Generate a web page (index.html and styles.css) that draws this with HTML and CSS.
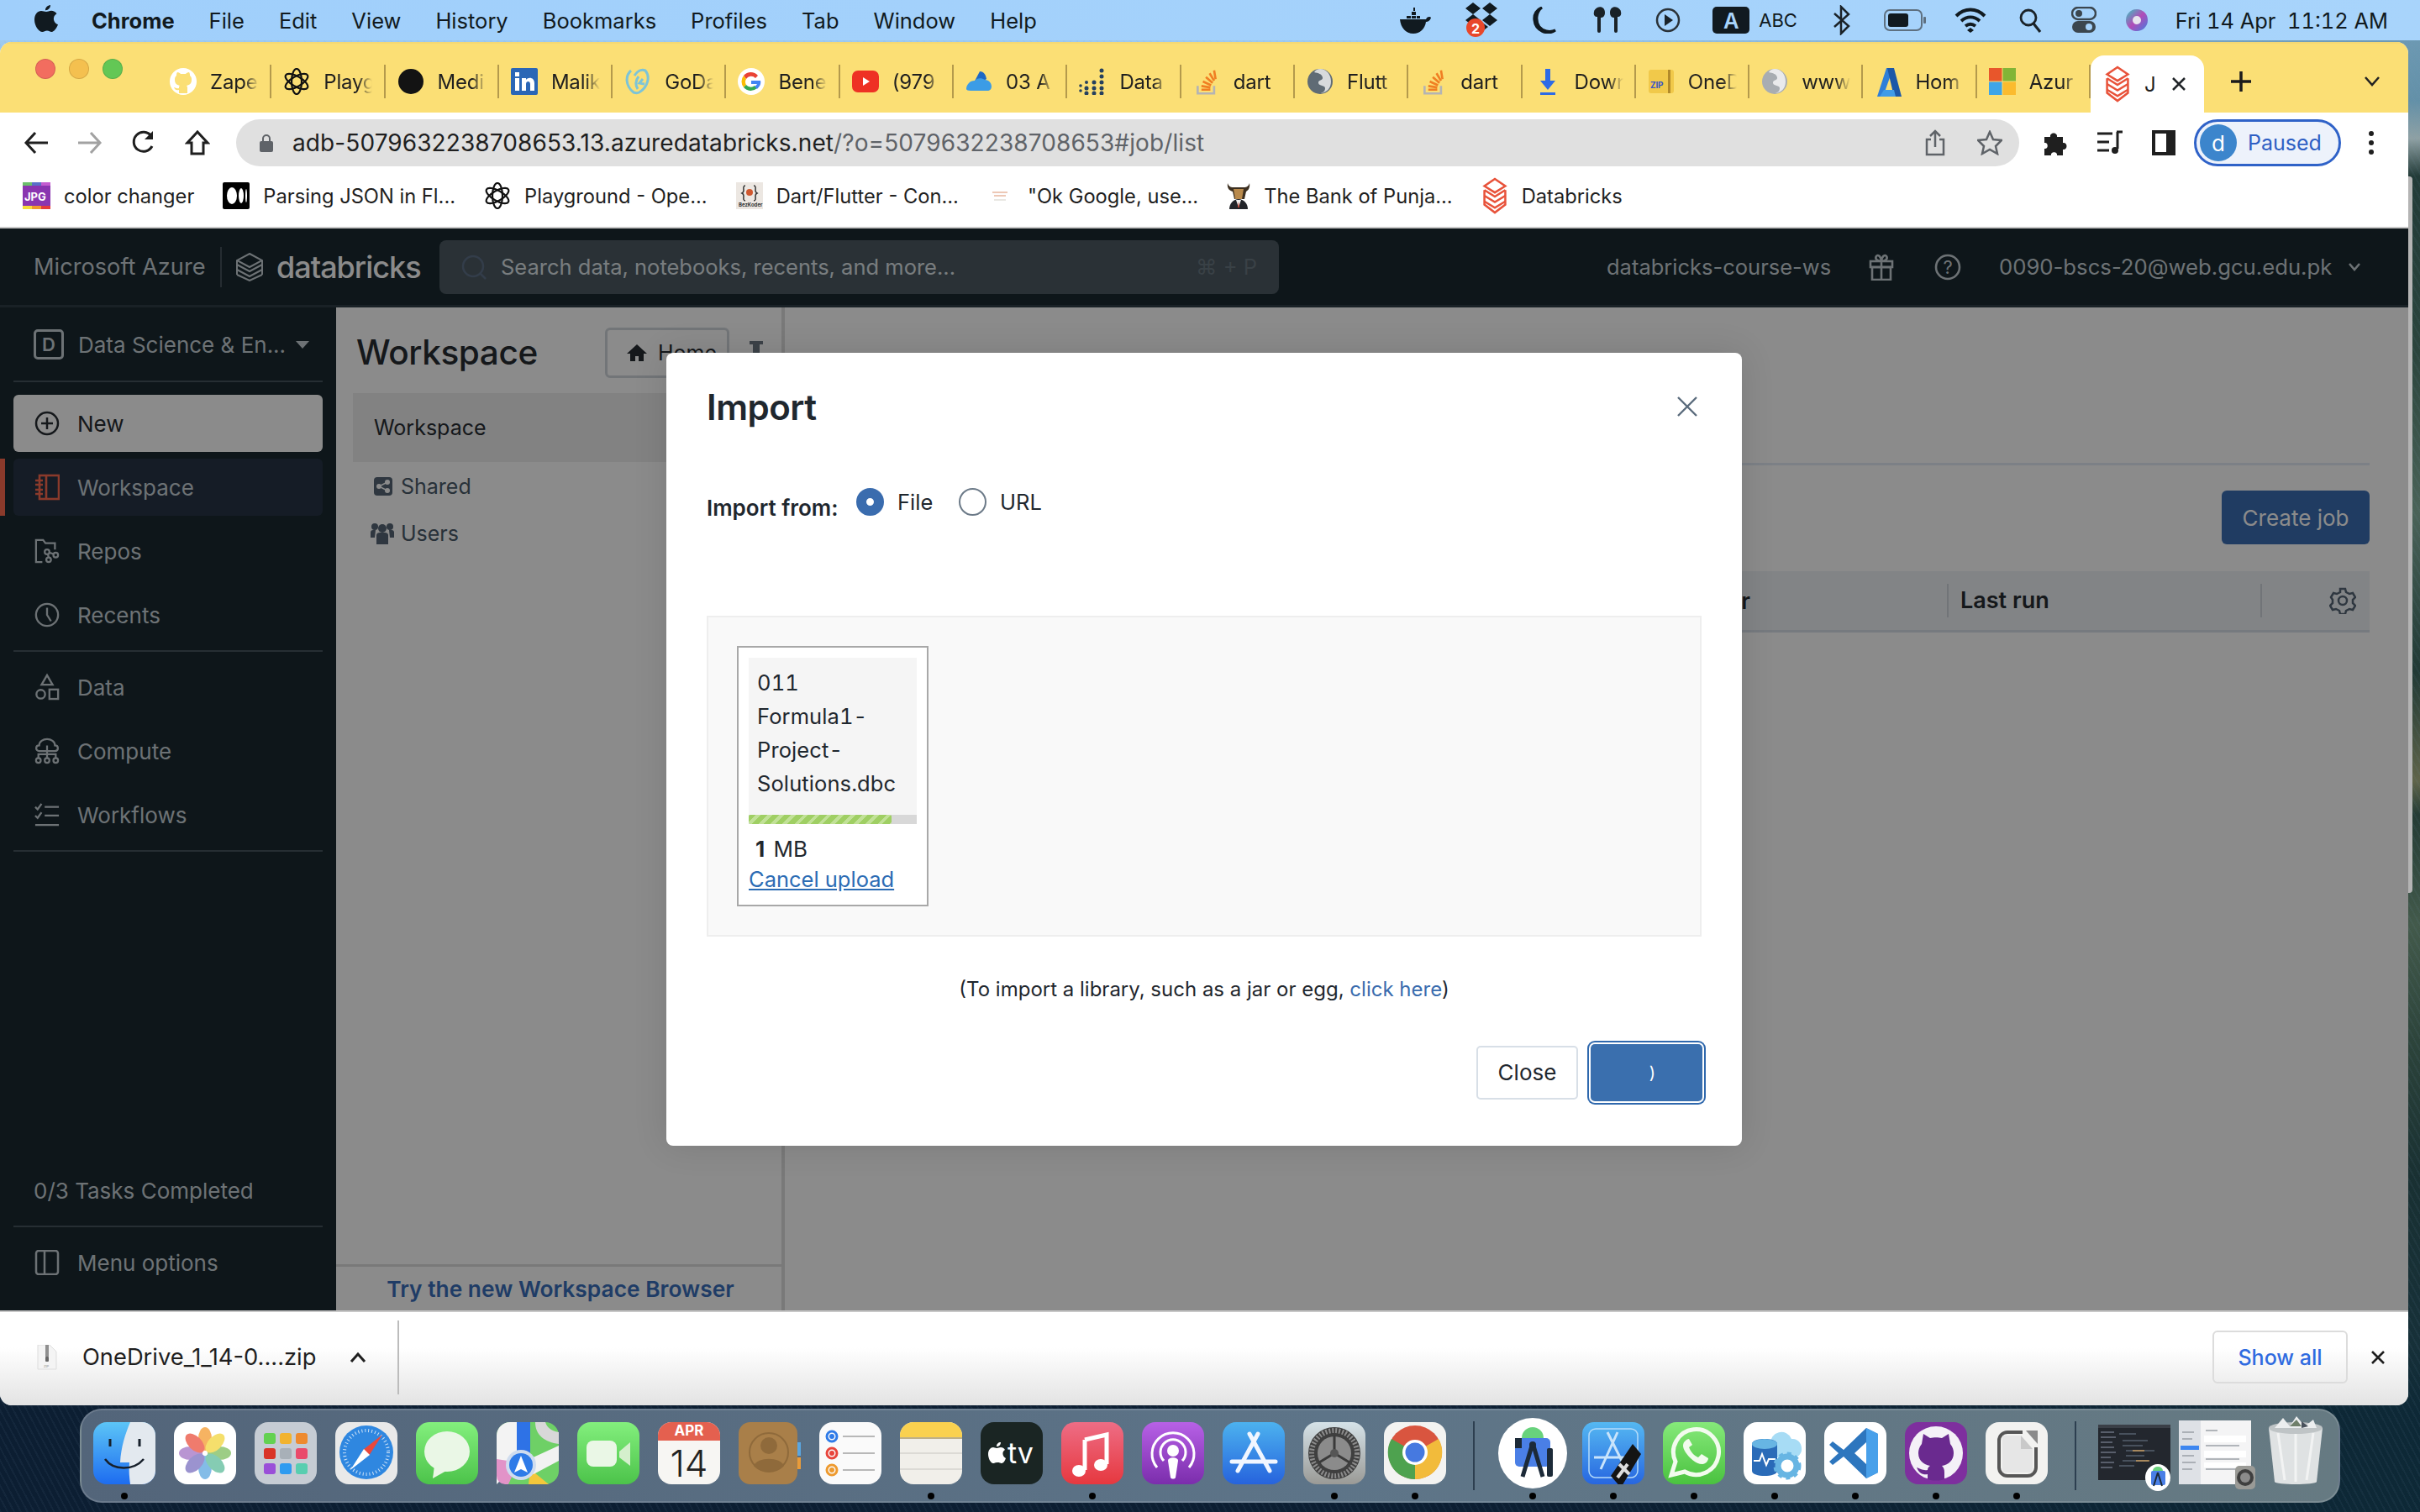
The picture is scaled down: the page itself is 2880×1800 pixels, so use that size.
FILE: index.html
```html
<!DOCTYPE html>
<html lang="en">
<head>
<meta charset="utf-8">
<title>Jobs - Databricks</title>
<link rel="stylesheet" href="styles.css">
</head>
<body>
<svg class="defs" xmlns="http://www.w3.org/2000/svg">
  <symbol id="db" viewBox="0 0 32 46"><g fill="none" stroke="currentColor" stroke-width="2.6"><path d="M16 2 29 11 16 19 3 11Z"/><path d="M3 16 16 24 29 16"/><path d="M3 23 16 31 29 23"/><path d="M3 30 16 38 29 30"/><path d="M3 16V34L16 44 29 34V16"/></g></symbol>
  <symbol id="db2" viewBox="0 0 32 34"><g fill="none" stroke="currentColor" stroke-width="2"><path d="M16 1 31 9 16 17 1 9Z"/><path d="M1 14 16 22 31 14"/><path d="M1 20 16 28 31 20"/><path d="M1 26 16 33 31 26"/><path d="M1 9V26M31 9V26"/></g></symbol>
  <symbol id="ai" viewBox="0 0 32 32"><g fill="none" stroke="currentColor" stroke-width="2.2"><ellipse cx="16" cy="16" rx="6" ry="15"/><ellipse cx="16" cy="16" rx="6" ry="15" transform="rotate(60 16 16)"/><ellipse cx="16" cy="16" rx="6" ry="15" transform="rotate(120 16 16)"/></g></symbol>
  <symbol id="globe" viewBox="0 0 32 32"><circle cx="16" cy="16" r="15" fill="currentColor"/><path d="M9 5c5 1 9 2 10 6s-6 3-5 7 8 2 8 6-3 5-5 6c7-1 12-6 12-14S24 1 16 1c-3 0-5 1-7 4Z" fill="#fff" opacity=".75"/></symbol>
  <symbol id="so" viewBox="0 0 32 36"><path d="M4 24v10h22V24" fill="none" stroke="#b4b4b4" stroke-width="3"/><path d="M9 29h12M9 24l12 2M11 18l11 5M15 12l9 8M20 7l6 10M26 3l2 12" stroke="#f07f23" stroke-width="3" fill="none"/></symbol>
</svg>

<div class="back-window"></div>

<header class="menubar">
  <nav class="menu-left">
    <svg class="apple" width="28" height="32" viewBox="0 0 28 32"><path d="M19 0c.3 3-2.800 6.500-6 6.200C12.700 3.200 15.800.2 19 0ZM14 8c2 0 3.500-1.300 6-1.300 2.500 0 5 1.300 6.500 3.600-5.500 3.200-4.500 10.700 1.500 13-1.500 3.700-4.500 8.700-7.500 8.700-2.200 0-3-1.400-5.500-1.400s-3.500 1.400-5.500 1.400C5 32 0 24.500 0 17.500 0 11 4 7 8 7c2.500 0 4 1 6 1Z" fill="#111a20"/></svg>
    <span class="menu-strong">Chrome</span><span>File</span><span>Edit</span><span>View</span><span>History</span><span>Bookmarks</span><span>Profiles</span><span>Tab</span><span>Window</span><span>Help</span>
  </nav>
  <div class="menu-right">
    <svg width="40" height="32" viewBox="0 0 40 32"><path d="M2 15h31c2-4 5-3 6-2-1 4-4 5-6 5-1 8-7 14-15 14C9 32 3 25 2 15Z" fill="#111a20"/><path d="M10 11h5v3h-5zM16 11h5v3h-5zM16 6h5v4h-5zM22 11h4v3h-4z" fill="#111a20"/><path d="M18 1h2v4h-2z" fill="#111a20"/></svg>
    <svg width="42" height="42" viewBox="0 0 42 42" class="drop"><path d="M11 0l9 7-9 7-9-7ZM31 0l9 7-9 7-9-7ZM11 14l9 7-9 7-9-7ZM31 14l9 7-9 7-9-7ZM21 23l8 6-8 6-8-6Z" fill="#111a20"/><circle cx="14" cy="30" r="11" fill="#e8472b"/><text x="14" y="37" class="badge-num">2</text></svg>
    <svg width="34" height="32" viewBox="0 0 34 32"><path d="M13 1C6 6 5 17 10 24c4 5 12 7 19 4-10 7-24 0-25-12C3 9 7 3 13 1Z" fill="#111a20" stroke="#111a20" stroke-width="3"/></svg>
    <svg width="38" height="34" viewBox="0 0 38 34"><path d="M7 2c5-2 9 1 9 6s-3 6-5 6v16a2 2 0 0 1-4 0V13C4 13 2 11 3 7c0-2 2-4 4-5ZM31 2c-5-2-9 1-9 6s3 6 5 6v16a2 2 0 0 0 4 0V13c3 0 5-2 4-6 0-2-2-4-4-5Z" fill="#1a2228"/></svg>
    <svg width="30" height="32" viewBox="0 0 30 32"><circle cx="15" cy="16" r="13" fill="none" stroke="#2a3238" stroke-width="2.500"/><path d="M11 9l10 7-10 7Z" fill="#1a2228"/></svg>
    <span class="input-a">A</span><span class="input-abc">ABC</span>
    <svg class="mr-bt" width="24" height="36" viewBox="0 0 24 36"><path d="M3 10 20 25 11 34V2l9 9L3 26" fill="none" stroke="#1a2228" stroke-width="2.500"/></svg>
    <svg width="50" height="26" viewBox="0 0 50 26"><rect x="1" y="1" width="44" height="24" rx="6" fill="none" stroke="#5e7080" stroke-width="2"/><rect x="5" y="5" width="24" height="16" rx="3" fill="#111a20"/><rect x="47" y="9" width="3" height="8" rx="1" fill="#5e7080"/></svg>
    <svg class="mr-wifi" width="38" height="30" viewBox="0 0 38 30"><path d="M2 10c10-10 24-10 34 0M8 16c7-6 15-6 22 0M13 22c4-3 8-3 12 0" fill="none" stroke="#111a20" stroke-width="4"/><path d="M19 24l4 3-4 3-4-3Z" fill="#111a20"/></svg>
    <svg width="28" height="30" viewBox="0 0 28 30"><circle cx="12" cy="12" r="9" fill="none" stroke="#1a2228" stroke-width="2.800"/><path d="M18 19l8 10" stroke="#1a2228" stroke-width="3.200"/></svg>
    <svg class="mr-ctl" width="30" height="32" viewBox="0 0 30 32"><rect x="1" y="1" width="28" height="14" rx="7" fill="none" stroke="#3b464e" stroke-width="2.500"/><circle cx="9" cy="8" r="4" fill="#3b464e"/><rect x="1" y="17" width="28" height="14" rx="7" fill="#3b464e"/><circle cx="21" cy="24" r="4" fill="#a5d2fb"/></svg>
    <svg class="mr-siri" width="28" height="32" viewBox="0 0 28 32"><defs><linearGradient id="siri" x1="0" y1="0" x2="1" y2="1"><stop offset="0" stop-color="#37c6c0"/><stop offset=".5" stop-color="#b24bb8"/><stop offset="1" stop-color="#3f7fe0"/></linearGradient></defs><circle cx="14" cy="16" r="13" fill="url(#siri)"/><circle cx="14" cy="16" r="5" fill="#e8e4ee"/></svg>
    <span class="clock">Fri 14 Apr&nbsp;&nbsp;11:12 AM</span>
  </div>
</header>

<div class="window">
  <div class="tabstrip">
    <div class="lights"><i class="light red"></i><i class="light amber"></i><i class="light green"></i></div>
    <div class="tabs">
      <div class="tab"><svg width="32" height="32" viewBox="0 0 32 32"><circle cx="16" cy="16" r="16" fill="#fff"/><path d="M11 30v-4c-4 1-5-1-6-3 2 0 3 2 6 1 0-2 0-2 1-3-4-1-6-3-6-7 0-2 0-3 2-5 0-1 0-3 1-4 2 0 3 1 4 2 2 0 4 0 6 0 1-1 2-2 4-2 1 1 1 3 1 4 2 2 2 3 2 5 0 4-2 6-6 7 1 1 1 2 1 3v6Z" fill="#fbdf75"/></svg><span class="tab-title">Zape</span></div>
      <div class="tab"><svg class="ink" width="32" height="32"><use href="#ai"/></svg><span class="tab-title">Playg</span></div>
      <div class="tab"><svg width="32" height="32" viewBox="0 0 32 32"><circle cx="16" cy="16" r="15" fill="#131313"/></svg><span class="tab-title">Medi</span></div>
      <div class="tab"><svg width="32" height="32" viewBox="0 0 32 32"><rect width="32" height="32" rx="2" fill="#2a66b6"/><path d="M5 12h5v15H5zM5 5h5v5H5zM13 12h5v2c3-4 10-3 10 4v9h-5v-8c0-4-5-4-5 0v8h-5Z" fill="#fff"/></svg><span class="tab-title">Malik</span></div>
      <div class="tab"><svg width="32" height="32" viewBox="0 0 32 32"><path d="M8 3c-7 6-7 18 3 26 3 1 6 1 8-1 9-6 12-18 6-25-5-2-10 1-13 6M17 10c-4 5-4 11-1 15M22 13l-4 5 6 1" fill="none" stroke="#7cc4d8" stroke-width="3"/></svg><span class="tab-title">GoDa</span></div>
      <div class="tab"><svg width="32" height="32" viewBox="0 0 32 32"><circle cx="16" cy="16" r="16" fill="#fff"/><path d="M24 9a11 11 0 0 0-17 0l3 4a7 7 0 0 1 11-1Z" fill="#ea4335"/><path d="M7 9a11 11 0 0 0 0 14l3-3a7 7 0 0 1 0-7Z" fill="#fbbc05"/><path d="M7 23a11 11 0 0 0 16 1l-3-3a7 7 0 0 1-10-1Z" fill="#34a853"/><path d="M27 15H16v4h7a7 7 0 0 1-3 3l3 3c3-3 5-6 4-10Z" fill="#4285f4"/></svg><span class="tab-title">Bene</span></div>
      <div class="tab"><svg width="32" height="32" viewBox="0 0 32 32"><rect y="3" width="32" height="26" rx="7" fill="#ee3124"/><path d="M13 11l8 5-8 5Z" fill="#fff"/></svg><span class="tab-title">(979</span></div>
      <div class="tab"><svg width="32" height="32" viewBox="0 0 32 32"><path d="M6 25 17 4c4 0 7 3 8 9Z" fill="#1d68c5"/><path d="M1 25c0-5 4-10 10-10 2-3 8-4 12-1 5 0 8 4 8 8 0 3-2 5-5 5H6c-3 0-5-1-5-2Z" fill="#3b9ce6"/></svg><span class="tab-title">03 A</span></div>
      <div class="tab"><svg width="32" height="32" viewBox="0 0 32 32" fill="#25405e"><circle cx="27" cy="3" r="2.500"/><circle cx="27" cy="10" r="2.500"/><circle cx="27" cy="17" r="2.500"/><circle cx="27" cy="24" r="2.500"/><circle cx="27" cy="30" r="2.500"/><circle cx="18" cy="17" r="2.500"/><circle cx="18" cy="24" r="2.500"/><circle cx="18" cy="30" r="2.500"/><circle cx="9" cy="17" r="2"/><circle cx="9" cy="24" r="2.500"/><circle cx="9" cy="30" r="2.500"/><circle cx="2" cy="21" r="1.800"/><circle cx="2" cy="27" r="1.800"/></svg><span class="tab-title">Data</span></div>
      <div class="tab"><svg width="32" height="32"><use href="#so"/></svg><span class="tab-title">dart</span></div>
      <div class="tab"><svg width="32" height="32" class="globe-dark"><use href="#globe"/></svg><span class="tab-title">Flutt</span></div>
      <div class="tab"><svg width="32" height="32"><use href="#so"/></svg><span class="tab-title">dart</span></div>
      <div class="tab"><svg width="32" height="32" viewBox="0 0 32 32"><path d="M13 1h6v14h6L16 26 7 15h6ZM7 29h18v3H7Z" fill="#2d6be6"/></svg><span class="tab-title">Down</span></div>
      <div class="tab"><svg width="32" height="32" viewBox="0 0 32 32"><rect x="1" y="2" width="30" height="28" rx="3" fill="#f1c94a"/><rect x="24" y="2" width="3" height="28" fill="#b28a2a"/><text x="3" y="24" class="zip">ZIP</text></svg><span class="tab-title">OneD</span></div>
      <div class="tab"><svg width="32" height="32" class="globe-light"><use href="#globe"/></svg><span class="tab-title">www</span></div>
      <div class="tab"><svg width="32" height="36" viewBox="0 0 32 36"><path d="M3 36 14 2h8L10 36Z" fill="#2f7fd8"/><path d="M15 2h8l9 34h-9Z" fill="#1c58a8"/><path d="M11 28h12l2 8H6Z" fill="#3f9be8"/></svg><span class="tab-title">Hom</span></div>
      <div class="tab"><svg width="32" height="32" viewBox="0 0 32 32"><rect width="15.500" height="15.500" fill="#e8562b"/><rect x="16.500" width="15.500" height="15.500" fill="#82b536"/><rect y="16.500" width="15.500" height="15.500" fill="#3ea5e8"/><rect x="16.500" y="16.500" width="15.500" height="15.500" fill="#fbbb2e"/></svg><span class="tab-title">Azur</span></div>
      <div class="tab tab-active"><svg class="db-red" width="32" height="44"><use href="#db"/></svg><span class="tab-title tab-title-short">J</span><svg class="tab-close" width="16" height="16" viewBox="0 0 16 16"><path d="M1 1 15 15M15 1 1 15" stroke="#202428" stroke-width="2.500"/></svg></div>
    </div>
    <svg class="newtab" width="26" height="26" viewBox="0 0 26 26"><path d="M13 1V25M1 13H25" stroke="#1b1b1b" stroke-width="3.500"/></svg>
    <svg class="tabmenu" width="20" height="14" viewBox="0 0 20 14"><path d="M2 2 10 11 18 2" fill="none" stroke="#222" stroke-width="2.500"/></svg>
  </div>

  <div class="toolbar">
    <svg width="30" height="28" viewBox="0 0 30 28"><path d="M14 2 3 14 14 26M3 14H29" fill="none" stroke="#1f1f1f" stroke-width="3"/></svg>
    <svg width="30" height="28" viewBox="0 0 30 28"><path d="M16 2 27 14 16 26M27 14H1" fill="none" stroke="#a2a2a2" stroke-width="3"/></svg>
    <svg width="30" height="30" viewBox="0 0 30 30"><path d="M25 19a11.500 11.500 0 1 1-1-12" fill="none" stroke="#1f1f1f" stroke-width="3"/><path d="M26 1v10H16Z" fill="#1f1f1f"/></svg>
    <svg width="30" height="30" viewBox="0 0 30 30"><path d="M15 2 3 15h5v13h14V15h5Z" fill="none" stroke="#1f1f1f" stroke-width="3"/></svg>
    <div class="omnibox">
      <svg width="16" height="22" viewBox="0 0 16 22"><path d="M4 9V6a4 4 0 0 1 8 0v3" fill="none" stroke="#5f6368" stroke-width="2"/><rect y="9" width="16" height="13" rx="2" fill="#5f6368"/></svg>
      <span class="url"><b>adb-5079632238708653.13.azuredatabricks.net</b>/?o=5079632238708653#job/list</span>
      <svg class="omni-share" width="24" height="32" viewBox="0 0 24 32"><path d="M7 12H2v18h20V12h-5M12 21V2M6 8l6-6 6 6" fill="none" stroke="#5f6368" stroke-width="2.500"/></svg>
      <svg class="omni-star" width="30" height="30" viewBox="0 0 30 30"><path d="M15 2l4 9 10 1-7 7 2 9-9-5-9 5 2-9-7-7 10-1Z" fill="none" stroke="#5f6368" stroke-width="2.500"/></svg>
    </div>
    <svg class="tool-ext" width="30" height="30" viewBox="0 0 30 30"><path d="M2 8h7c-1-6 9-6 8 0h7v7c6-1 6 9 0 8v7h-7c1-5-8-5-7 0H2v-8c5 1 5-8 0-7Z" fill="#1f1f1f"/></svg>
    <svg class="tool-media" width="32" height="30" viewBox="0 0 32 30"><path d="M1 4h18M1 14h14M1 24h14" stroke="#1f1f1f" stroke-width="3"/><path d="M25 2v20" stroke="#1f1f1f" stroke-width="3"/><circle cx="22" cy="24" r="4" fill="#1f1f1f"/><path d="M24 2h7" stroke="#1f1f1f" stroke-width="3"/></svg>
    <svg class="tool-side" width="28" height="30" viewBox="0 0 28 30"><rect x="2" y="2" width="24" height="26" fill="none" stroke="#1f1f1f" stroke-width="4"/><rect x="17" y="2" width="9" height="26" fill="#1f1f1f"/></svg>
    <div class="profile"><span class="avatar">d</span><span class="paused">Paused</span></div>
    <svg class="tool-more" width="8" height="30" viewBox="0 0 8 30"><circle cx="4" cy="4" r="3" fill="#1f1f1f"/><circle cx="4" cy="15" r="3" fill="#1f1f1f"/><circle cx="4" cy="26" r="3" fill="#1f1f1f"/></svg>
  </div>

  <div class="bookmarks">
    <div class="bm"><svg width="33" height="32" viewBox="0 0 33 32"><rect width="33" height="32" fill="#8a35b0"/><rect width="11" height="4" fill="#6bbf6b"/><rect x="11" width="11" height="4" fill="#5a70c8"/><rect x="22" width="11" height="4" fill="#c45cd0"/><rect y="28" width="11" height="4" fill="#f5dd3a"/><rect x="11" y="28" width="11" height="4" fill="#f09a2e"/><rect x="22" y="28" width="11" height="4" fill="#e43b3b"/><text x="2" y="22" class="jpg">JPG</text></svg><span>color changer</span></div>
    <div class="bm"><svg width="32" height="32" viewBox="0 0 32 32"><rect width="32" height="32" rx="2" fill="#000"/><ellipse cx="11" cy="16" rx="6" ry="10" fill="#fff"/><ellipse cx="22" cy="16" rx="3" ry="9" fill="#fff"/><ellipse cx="28" cy="16" rx="1" ry="8" fill="#fff"/></svg><span>Parsing JSON in Fl...</span></div>
    <div class="bm"><svg class="ink" width="32" height="32"><use href="#ai"/></svg><span>Playground - Ope...</span></div>
    <div class="bm"><svg width="32" height="32" viewBox="0 0 32 32"><rect width="32" height="32" fill="#ece7e2"/><path d="M11 4c-3 0-2 4-2 6s-2 3-2 3 2 1 2 3-1 6 2 6M21 4c3 0 2 4 2 6s2 3 2 3-2 1-2 3 1 6-2 6" fill="none" stroke="#333" stroke-width="1.500"/><circle cx="16" cy="12" r="4" fill="#d0582f"/><text x="3" y="29" class="bez">BezKoder</text></svg><span>Dart/Flutter - Con...</span></div>
    <div class="bm bm-google"><svg width="22" height="32" viewBox="0 0 22 32"><path d="M2 12h18M4 16h14" stroke="#e7b79e" stroke-width="1.500"/><path d="M4 21h14" stroke="#e2dfd8" stroke-width="1.500"/></svg><span>"Ok Google, use...</span></div>
    <div class="bm"><svg width="28" height="32" viewBox="0 0 28 32"><path d="M1 1c1 4 4 5 6 5h14c2 0 5-1 6-5 1 6-2 9-4 10l-2 9H9L7 11C3 10 0 7 1 1Z" fill="#3c2f20"/><path d="M8 8h12l-2 12h-8Z" fill="#b98a4c"/><path d="M3 32c0-7 5-12 11-12s11 5 11 12Z" fill="#23252a"/><path d="M11 21h6l-3 9Z" fill="#eee"/><path d="M14 23l1 7h-2Z" fill="#c53c2a"/></svg><span>The Bank of Punja...</span></div>
    <div class="bm"><svg class="db-red" width="32" height="44"><use href="#db"/></svg><span>Databricks</span></div>
  </div>

  <main class="app">
    <header class="app-head">
      <span class="brand-ms">Microsoft Azure</span>
      <i class="brand-sep"></i>
      <svg class="db-gray" width="32" height="34"><use href="#db2"/></svg>
      <span class="brand-db">databricks</span>
      <div class="search">
        <svg width="30" height="30" viewBox="0 0 30 30"><circle cx="14" cy="14" r="12" fill="none" stroke="#5e7088" stroke-width="2.500"/><path d="M23 23l6 6" stroke="#5e7088" stroke-width="2.500"/></svg>
        <span class="search-ph">Search data, notebooks, recents, and more...</span>
        <span class="search-kbd">⌘ + P</span>
      </div>
      <span class="ws-name">databricks-course-ws</span>
      <svg class="head-gift" width="30" height="32" viewBox="0 0 30 32"><g fill="none" stroke="#c8d1d7" stroke-width="2.600"><rect x="2" y="9" width="26" height="7"/><rect x="4" y="16" width="22" height="15"/><path d="M15 9V31M15 9C10 9 7 6 9 3s6 1 6 6c0-5 4-9 6-6s-1 6-6 6Z"/></g></svg>
      <svg class="head-help" width="32" height="34" viewBox="0 0 32 34"><circle cx="16" cy="17" r="14" fill="none" stroke="#c8d1d7" stroke-width="2.600"/><text x="16" y="25" class="help-q">?</text></svg>
      <span class="email">0090-bscs-20@web.gcu.edu.pk</span>
      <svg class="head-caret" width="16" height="12" viewBox="0 0 16 12"><path d="M2 2 8 9 14 2" fill="none" stroke="#c8d1d7" stroke-width="2.600"/></svg>
    </header>
    <div class="app-body">
      <aside class="sidebar">
        <div class="persona">
          <span class="persona-d">D</span><span class="persona-name">Data Science &amp; En...</span><i class="persona-caret"></i>
        </div>
        <div class="side-rule"></div>
        <div class="side-item side-new"><svg width="30" height="30" viewBox="0 0 30 30"><g fill="none" stroke="#272c32" stroke-width="2.500"><circle cx="15" cy="15" r="13"/><path d="M15 8V22M8 15H22"/></g></svg><span>New</span></div>
        <div class="side-item side-active"><svg width="30" height="32" viewBox="0 0 30 32"><g fill="none" stroke="#ff6b4f" stroke-width="2.600"><rect x="6" y="2" width="23" height="28"/><path d="M14 2V30M1 8h9M1 13h9M1 19h9M1 24h9"/></g></svg><span>Workspace</span></div>
        <div class="side-item"><svg width="32" height="32" viewBox="0 0 32 32"><g fill="none" stroke="#c8d1d7" stroke-width="2.400"><path d="M10 30H2V2h9l3 4h12v8"/><circle cx="16" cy="17" r="3"/><circle cx="18" cy="27" r="3"/><circle cx="27" cy="21" r="3"/><path d="M17 20l1 4M19 18l6 2"/></g></svg><span>Repos</span></div>
        <div class="side-item"><svg width="32" height="32" viewBox="0 0 32 32"><g fill="none" stroke="#c8d1d7" stroke-width="2.500"><circle cx="16" cy="16" r="14"/><path d="M16 7V16L21 24"/></g></svg><span>Recents</span></div>
        <div class="side-rule side-rule-mid"></div>
        <div class="side-item"><svg width="32" height="34" viewBox="0 0 32 34"><g fill="none" stroke="#c8d1d7" stroke-width="2.500"><path d="M16 2 23 14H9Z"/><circle cx="8" cy="26" r="5.500"/><rect x="19" y="20" width="11" height="12"/></g></svg><span>Data</span></div>
        <div class="side-item"><svg width="32" height="34" viewBox="0 0 32 34"><g fill="none" stroke="#c8d1d7" stroke-width="2.400"><path d="M6 17c-5 0-5-7 0-7 0-5 5-8 10-8s10 3 10 8c5 0 5 7 0 7Z"/><path d="M16 10V17M5 27V21H27V27M16 17V27"/><circle cx="5" cy="29" r="3"/><circle cx="16" cy="29" r="3"/><circle cx="27" cy="29" r="3"/></g></svg><span>Compute</span></div>
        <div class="side-item"><svg width="32" height="32" viewBox="0 0 32 32"><g fill="none" stroke="#c8d1d7" stroke-width="2.400"><path d="M1 6l3 3 5-7M1 17l3 3 5-7M13 6H31M13 17H31M1 29H31"/></g></svg><span>Workflows</span></div>
        <div class="side-rule side-rule-mid"></div>
        <div class="side-spacer"></div>
        <div class="side-tasks">0/3 Tasks Completed</div>
        <div class="side-rule side-rule-low"></div>
        <div class="side-item side-menu"><svg width="30" height="30" viewBox="0 0 30 30"><g fill="none" stroke="#c8d1d7" stroke-width="2.500"><rect x="2" y="1" width="26" height="28" rx="3"/><path d="M12 1V29"/></g></svg><span>Menu options</span></div>
      </aside>

      <section class="panel">
        <div class="panel-head">
          <h2>Workspace</h2>
          <div class="home-btn"><svg width="24" height="22" viewBox="0 0 24 22"><path d="M12 1 0 12h4v9h6v-6h4v6h6v-9h4Z" fill="#272c32"/></svg><span>Home</span></div>
          <svg class="pin" width="16" height="26" viewBox="0 0 16 26"><path d="M0 0h16v4h-4v14H4V4H0Z" fill="#6f7a85"/></svg>
        </div>
        <div class="panel-root">Workspace</div>
        <div class="panel-item"><svg width="22" height="24" viewBox="0 0 22 24"><rect y="1" width="22" height="22" rx="4" fill="#566676"/><g fill="#fff"><circle cx="16" cy="7" r="3"/><circle cx="6" cy="12" r="3"/><circle cx="16" cy="17" r="3"/></g><path d="M16 7 6 12 16 17" stroke="#fff" stroke-width="1.500" fill="none"/></svg><span>Shared</span></div>
        <div class="panel-item panel-item-users"><svg width="28" height="26" viewBox="0 0 28 26"><g fill="#566676"><circle cx="14" cy="7" r="5"/><circle cx="5" cy="5" r="4"/><circle cx="23" cy="5" r="4"/><path d="M7 26V15c0-2 2-3 4-3h6c2 0 4 1 4 3v11Z"/><path d="M0 18v-6c0-2 1-3 3-3h3l-1 9ZM28 18v-6c0-2-1-3-3-3h-3l1 9Z"/></g></svg><span>Users</span></div>
        <div class="panel-spacer"></div>
        <div class="panel-foot">Try the new Workspace Browser</div>
      </section>

      <section class="content">
        <div class="content-rule"></div>
        <div class="content-actions"><span class="create-job">Create job</span></div>
        <div class="jobs-head">
          <span class="col-owner">Owner</span>
          <span class="col-last">Last run</span>
          <svg class="col-gear" width="32" height="32" viewBox="0 0 32 32"><g fill="none" stroke="#566676" stroke-width="2.500"><path d="M13 2h6l1 4 4 2 4-1 3 5-3 3v4l3 3-3 5-4-1-4 2-1 4h-6l-1-4-4-2-4 1-3-5 3-3v-4L2 12l3-5 4 1 4-2Z"/><circle cx="16" cy="16" r="5"/></g></svg>
        </div>
      </section>
    </div>

    <div class="overlay">
      <div class="modal">
        <div class="modal-head">
          <h3>Import</h3>
          <svg width="26" height="26" viewBox="0 0 26 26"><path d="M2 2 24 24M24 2 2 24" stroke="#5a6b7c" stroke-width="2.400"/></svg>
        </div>
        <div class="import-from">
          <label class="import-label">Import from:</label>
          <span class="radio radio-on"></span><span class="radio-text">File</span>
          <span class="radio"></span><span class="radio-text">URL</span>
        </div>
        <div class="dropzone">
          <div class="file-card">
            <div class="file-name">011<br>Formula1-<br>Project-<br>Solutions.dbc</div>
            <div class="progress"><div class="progress-bar"></div></div>
            <div class="file-size"><b>1</b> MB</div>
            <a class="file-cancel">Cancel upload</a>
          </div>
        </div>
        <p class="lib-note">(To import a library, such as a jar or egg, <a>click here</a>)</p>
        <div class="modal-foot">
          <span class="btn-close">Close</span>
          <span class="btn-primary"><i class="spinner">)</i></span>
        </div>
      </div>
    </div>
  </main>

  <footer class="downloads">
    <svg class="dl-file" width="24" height="30" viewBox="0 0 24 30"><path d="M1 0h14l8 8v21H1Z" fill="#f4f4f4" stroke="#ddd"/><path d="M10 0h4v14h-4Z" fill="#8f8f8f"/><rect x="10" y="14" width="4" height="6" rx="1" fill="#666"/><text x="8" y="27" class="dl-zip">ZIP</text></svg>
    <span class="dl-name">OneDrive_1_14-0....zip</span>
    <svg class="dl-caret" width="20" height="14" viewBox="0 0 20 14"><path d="M2 12 10 3 18 12" fill="none" stroke="#1f1f1f" stroke-width="3"/></svg>
    <i class="dl-sep"></i>
    <span class="dl-all">Show all</span>
    <svg class="dl-x" width="18" height="18" viewBox="0 0 18 18"><path d="M2 2 16 16M16 2 2 16" stroke="#1f1f1f" stroke-width="2.600"/></svg>
  </footer>
</div>

<div class="dock">
  <div class="dock-item"><svg width="74" height="74" viewBox="0 0 74 74"><defs><linearGradient id="f1" x1="0" y1="0" x2="0" y2="1"><stop offset="0" stop-color="#5cc5f7"/><stop offset="1" stop-color="#1d6cf0"/></linearGradient></defs><rect width="74" height="74" rx="16" fill="url(#f1)"/><path d="M44 0H58a16 16 0 0 1 16 16V58a16 16 0 0 1-16 16H44c-1-8-2-16-1-26H32C33 30 38 14 44 0Z" fill="#e3e9ef"/><path d="M14 44c10 14 34 14 46 0" fill="none" stroke="#17202b" stroke-width="2.500"/><path d="M20 20v9M55 20v9" stroke="#17202b" stroke-width="3"/></svg><i class="dock-dot"></i></div>
  <div class="dock-item"><svg width="74" height="74" viewBox="0 0 74 74"><rect width="74" height="74" rx="16" fill="#fff"/><g opacity=".75"><ellipse cx="37" cy="20" rx="8" ry="14" fill="#f39a2e"/><ellipse cx="37" cy="54" rx="8" ry="14" fill="#5aa6e0"/><ellipse cx="20" cy="37" rx="14" ry="8" fill="#a272c4"/><ellipse cx="54" cy="37" rx="14" ry="8" fill="#7dbd5d"/><ellipse cx="25" cy="25" rx="8" ry="14" transform="rotate(-45 25 25)" fill="#ea4f3d"/><ellipse cx="49" cy="25" rx="8" ry="14" transform="rotate(45 49 25)" fill="#f2d53c"/><ellipse cx="25" cy="49" rx="8" ry="14" transform="rotate(45 25 49)" fill="#7a6fc0"/><ellipse cx="49" cy="49" rx="8" ry="14" transform="rotate(-45 49 49)" fill="#5dbb9a"/></g></svg><i class="dock-dot dock-dot-off"></i></div>
  <div class="dock-item"><svg width="74" height="74" viewBox="0 0 74 74"><rect width="74" height="74" rx="16" fill="#c6ccd4"/><rect x="11" y="13" width="14" height="13" rx="3" fill="#63d151"/><rect x="30" y="13" width="14" height="13" rx="3" fill="#f2b32f"/><rect x="49" y="13" width="14" height="13" rx="3" fill="#ee8a2f"/><rect x="11" y="31" width="14" height="13" rx="3" fill="#d93327"/><rect x="30" y="31" width="14" height="13" rx="3" fill="#a8b0b8"/><rect x="49" y="31" width="14" height="13" rx="3" fill="#ea4a6b"/><rect x="11" y="49" width="14" height="13" rx="3" fill="#9a4fd8"/><rect x="30" y="49" width="14" height="13" rx="3" fill="#2e9bf0"/><rect x="49" y="49" width="14" height="13" rx="3" fill="#58ceb0"/></svg><i class="dock-dot dock-dot-off"></i></div>
  <div class="dock-item"><svg width="74" height="74" viewBox="0 0 74 74"><rect width="74" height="74" rx="16" fill="#e9e9e9"/><circle cx="37" cy="36" r="32" fill="#2f87e0"/><circle cx="37" cy="36" r="26" fill="none" stroke="#cfe3f7" stroke-width="4" stroke-dasharray="1 3"/><path d="M56 15 40 40 33 33Z" fill="#e9483c"/><path d="M18 57 34 32 41 39Z" fill="#fff"/></svg><i class="dock-dot dock-dot-off"></i></div>
  <div class="dock-item"><svg width="74" height="74" viewBox="0 0 74 74"><defs><linearGradient id="m1" x1="0" y1="0" x2="0" y2="1"><stop offset="0" stop-color="#83ef7d"/><stop offset="1" stop-color="#4cc34a"/></linearGradient></defs><rect width="74" height="74" rx="16" fill="url(#m1)"/><ellipse cx="37" cy="35" rx="27" ry="24" fill="#eaf7e6"/><path d="M22 52 20 67 36 58Z" fill="#eaf7e6"/></svg><i class="dock-dot dock-dot-off"></i></div>
  <div class="dock-item"><svg width="74" height="74" viewBox="0 0 74 74"><rect width="74" height="74" rx="16" fill="#6ed066"/><path d="M0 16A16 16 0 0 1 16 0H26V48L0 74Z" fill="#f3f3f3"/><path d="M0 44 26 48 14 74H10A10 10 0 0 1 0 64Z" fill="#e293c8"/><path d="M40 56 62 74H38Z" fill="#f3c73b"/><path d="M26 50 74 28V46L44 62Z" fill="#f2f2f2"/><path d="M24 0H40V38H24Z" fill="#2e72e6"/><path d="M46 0C46 16 58 24 74 26V12C64 10 60 6 58 0Z" fill="#d8d8d8"/><circle cx="29" cy="51" r="18" fill="#cfdcef"/><circle cx="29" cy="51" r="14" fill="#2f7be8"/><path d="M29 40 37 60 29 56 21 60Z" fill="#fff"/></svg><i class="dock-dot dock-dot-off"></i></div>
  <div class="dock-item"><svg width="74" height="74" viewBox="0 0 74 74"><defs><linearGradient id="m2" x1="0" y1="0" x2="0" y2="1"><stop offset="0" stop-color="#83ef7d"/><stop offset="1" stop-color="#4cc34a"/></linearGradient></defs><rect width="74" height="74" rx="16" fill="url(#m2)"/><rect x="11" y="22" width="36" height="31" rx="8" fill="#eaf7e6"/><path d="M50 35 63 24V52L50 42Z" fill="#d4efcc"/></svg><i class="dock-dot dock-dot-off"></i></div>
  <div class="dock-item"><svg width="74" height="74" viewBox="0 0 74 74"><rect width="74" height="74" rx="16" fill="#f7f6f3"/><path d="M0 22V16A16 16 0 0 1 16 0H58A16 16 0 0 1 74 16V22Z" fill="#e4604f"/><text x="37" y="16" class="cal-month">APR</text><text x="37" y="65" class="cal-day">14</text></svg><i class="dock-dot dock-dot-off"></i></div>
  <div class="dock-item"><svg width="74" height="74" viewBox="0 0 74 74"><rect width="70" height="74" rx="14" fill="#a97f49"/><rect x="70" y="24" width="4" height="16" fill="#5aa6e0"/><rect x="70" y="42" width="4" height="14" fill="#e89b3a"/><circle cx="36" cy="36" r="23" fill="none" stroke="#8f6a3b" stroke-width="2"/><circle cx="36" cy="28" r="10" fill="#8f6a3b"/><path d="M18 52c4-11 32-11 36 0-8 9-28 9-36 0Z" fill="#8f6a3b"/></svg><i class="dock-dot dock-dot-off"></i></div>
  <div class="dock-item"><svg width="74" height="74" viewBox="0 0 74 74"><rect width="74" height="74" rx="16" fill="#fafafa"/><circle cx="15" cy="17" r="6" fill="none" stroke="#2f7be8" stroke-width="3"/><circle cx="15" cy="17" r="3" fill="#2f7be8"/><circle cx="15" cy="37" r="6" fill="none" stroke="#e8453c" stroke-width="3"/><circle cx="15" cy="37" r="3" fill="#e8453c"/><circle cx="15" cy="57" r="6" fill="none" stroke="#ee9a2e" stroke-width="3"/><circle cx="15" cy="57" r="3" fill="#ee9a2e"/><path d="M28 17H66M28 37H66M28 57H66" stroke="#b8b8b8" stroke-width="2"/></svg><i class="dock-dot dock-dot-off"></i></div>
  <div class="dock-item"><svg width="74" height="74" viewBox="0 0 74 74"><rect width="74" height="74" rx="16" fill="#f1efea"/><path d="M0 18V16A16 16 0 0 1 16 0H58A16 16 0 0 1 74 16V18Z" fill="#fad14f"/><rect y="18" width="74" height="2" fill="#bdb08a"/><path d="M0 37H74M0 56H74" stroke="#dcdad5" stroke-width="2"/></svg><i class="dock-dot"></i></div>
  <div class="dock-item"><svg width="74" height="74" viewBox="0 0 74 74"><rect width="74" height="74" rx="16" fill="#1a2523"/><path transform="translate(-5 4)" d="M24 25c3 0 5-2 5-5-3 0-5 2-5 5ZM24 27c2 0 3-1 5-1 2 0 4 1 5 3-4 2-3 8 1 10-1 3-3 6-5 6-2 0-2-1-5-1s-3 1-5 1c-3 0-6-6-6-11 0-5 3-8 6-8 1 0 3 1 4 1Z" fill="#fff"/><text x="32" y="49" class="tv-text">tv</text></svg><i class="dock-dot dock-dot-off"></i></div>
  <div class="dock-item"><svg width="74" height="74" viewBox="0 0 74 74"><defs><linearGradient id="mu" x1="0" y1="0" x2="0" y2="1"><stop offset="0" stop-color="#ee6d85"/><stop offset="1" stop-color="#e6383f"/></linearGradient></defs><rect width="74" height="74" rx="16" fill="url(#mu)"/><path d="M28 21 54 15V50" fill="none" stroke="#fff" stroke-width="5"/><path d="M28 21V57" stroke="#fff" stroke-width="5"/><ellipse cx="21" cy="58" rx="8" ry="7" fill="#fff"/><ellipse cx="47" cy="51" rx="8" ry="7" fill="#fff"/></svg><i class="dock-dot"></i></div>
  <div class="dock-item"><svg width="74" height="74" viewBox="0 0 74 74"><defs><linearGradient id="po" x1="0" y1="0" x2="0" y2="1"><stop offset="0" stop-color="#b761e6"/><stop offset="1" stop-color="#7b2dac"/></linearGradient></defs><rect width="74" height="74" rx="16" fill="url(#po)"/><g fill="none" stroke="#fff" stroke-width="3"><path d="M18 54a25 25 0 1 1 38 0"/><path d="M26 46a15 15 0 1 1 22 0"/></g><circle cx="37" cy="34" r="7" fill="#fff"/><path d="M31 46c0-5 12-5 12 0l-3 20c-1 2-5 2-6 0Z" fill="#fff"/></svg><i class="dock-dot dock-dot-off"></i></div>
  <div class="dock-item"><svg width="74" height="74" viewBox="0 0 74 74"><defs><linearGradient id="as" x1="0" y1="0" x2="0" y2="1"><stop offset="0" stop-color="#4cb2ef"/><stop offset="1" stop-color="#2663dd"/></linearGradient></defs><rect width="74" height="74" rx="16" fill="url(#as)"/><path d="M42 14 18 58M32 14 56 58M11 47H63" stroke="#f1f6ff" stroke-width="5" stroke-linecap="round"/></svg><i class="dock-dot dock-dot-off"></i></div>
  <div class="dock-item"><svg width="74" height="74" viewBox="0 0 74 74"><defs><linearGradient id="sp" x1="0" y1="0" x2="0" y2="1"><stop offset="0" stop-color="#d5e2e8"/><stop offset="1" stop-color="#9a9a96"/></linearGradient></defs><rect width="74" height="74" rx="16" fill="url(#sp)"/><circle cx="37" cy="37" r="31" fill="#3f3f3f"/><circle cx="37" cy="37" r="27" fill="none" stroke="#8c8c8c" stroke-width="6" stroke-dasharray="2 2"/><circle cx="37" cy="37" r="20" fill="#8b8b8b"/><path d="M37 37V16M37 37 19 48M37 37 55 48" stroke="#3a3a3a" stroke-width="3"/><circle cx="37" cy="37" r="5" fill="#555"/></svg><i class="dock-dot"></i></div>
  <div class="dock-item"><svg width="74" height="74" viewBox="0 0 74 74"><rect width="74" height="74" rx="16" fill="#f3f3f1"/><circle cx="37" cy="36" r="32" fill="#d9553f"/><path d="M37 36 9 20A32 32 0 0 0 37 68Z" fill="#4ea24f"/><path d="M37 36 65 20A32 32 0 0 1 37 68Z" fill="#f2bb3b"/><circle cx="37" cy="36" r="15" fill="#fff"/><circle cx="37" cy="36" r="11.500" fill="#4679e0"/></svg><i class="dock-dot"></i></div>
  <div class="dock-sep"></div>
  <div class="dock-item"><svg class="dock-as" width="82" height="84" viewBox="0 0 82 84"><ellipse cx="41" cy="42" rx="41" ry="42" fill="#fff"/><path d="M28 24a13 13 0 0 1 26 0Z" fill="#68d27c"/><rect x="20" y="24" width="42" height="34" rx="5" fill="#4a7fe6"/><path d="M20 24h8v12h-8Z" fill="#1c2a38"/><path d="M41 30 29 70M41 30 53 70" stroke="#1c2a38" stroke-width="5"/><rect x="58" y="36" width="7" height="34" rx="2" fill="#1c2a38"/><circle cx="41" cy="32" r="4" fill="#1c2a38"/></svg><i class="dock-dot"></i></div>
  <div class="dock-item"><svg width="74" height="74" viewBox="0 0 74 74"><defs><linearGradient id="xc" x1="0" y1="0" x2="0" y2="1"><stop offset="0" stop-color="#55b8f2"/><stop offset="1" stop-color="#2766e0"/></linearGradient></defs><rect width="74" height="74" rx="14" fill="url(#xc)"/><rect x="8" y="8" width="58" height="58" rx="8" fill="none" stroke="#b5dcfa" stroke-width="1.500"/><path d="M42 12 22 56M30 12 52 56M14 42H60" stroke="#c9e4fb" stroke-width="3"/><path d="M34 64 60 26 70 38 46 78Z" fill="#141414"/><path d="M54 50 42 66M44 50 56 62" stroke="#ddd" stroke-width="4"/></svg><i class="dock-dot"></i></div>
  <div class="dock-item"><svg width="74" height="74" viewBox="0 0 74 74"><defs><linearGradient id="wa" x1="0" y1="0" x2="0" y2="1"><stop offset="0" stop-color="#86e97a"/><stop offset="1" stop-color="#4ac23f"/></linearGradient></defs><rect width="74" height="74" rx="16" fill="url(#wa)"/><path d="M10 63 15 47A27 27 0 1 1 26 59Z" fill="none" stroke="#f2fbee" stroke-width="5"/><path d="M27 22c-4 3-4 8 0 14s12 14 20 14c4 0 7-4 7-7l-8-5-4 4c-5-2-9-7-11-12l4-3-4-7c-2 0-3 1-4 2Z" fill="#f2fbee"/></svg><i class="dock-dot"></i></div>
  <div class="dock-item"><svg width="74" height="74" viewBox="0 0 74 74"><rect width="74" height="74" rx="16" fill="#fff"/><path d="M32 26a13 13 0 0 1 25-6c8-1 13 6 12 14-1 5-5 8-10 8H34Z" fill="#a7dcf5"/><path d="M10 26c0-8 30-8 30 0V58c0 8-30 8-30 0Z" fill="#2a6bb8"/><ellipse cx="25" cy="26" rx="15" ry="6" fill="#67b5e3"/><path d="M12 46h7l3-8 5 13 3-7h8" fill="none" stroke="#fff" stroke-width="2"/><circle cx="52" cy="52" r="11" fill="none" stroke="#67b5e3" stroke-width="7"/><circle cx="52" cy="52" r="15" fill="none" stroke="#67b5e3" stroke-width="3" stroke-dasharray="5 5"/></svg><i class="dock-dot"></i></div>
  <div class="dock-item"><svg width="74" height="74" viewBox="0 0 74 74"><rect width="74" height="74" rx="16" fill="#fff"/><path d="M50 7 64 14V60L50 67 23 41 10 51 6 47 17 37 6 27 10 23 23 33ZM50 24 36 37 50 50Z" fill="#2d76be"/><path d="M50 7 64 14V60L50 67Z" fill="#48a0ea"/></svg><i class="dock-dot"></i></div>
  <div class="dock-item"><svg width="74" height="74" viewBox="0 0 74 74"><rect width="74" height="74" rx="16" fill="#7e2f9e"/><circle cx="37" cy="37" r="32" fill="#f4f1f7"/><path d="M22 14 30 19C34 18 40 18 44 19L52 14 54 26C57 30 58 33 58 37 58 46 51 51 44 52 46 54 47 56 47 60V68C41 70 33 70 27 68V62C21 63 17 61 14 54 17 55 21 58 27 57 27 55 28 53 30 52 23 51 16 46 16 37 16 33 17 30 20 26Z" fill="#6a2a8f"/></svg><i class="dock-dot"></i></div>
  <div class="dock-item"><svg width="74" height="74" viewBox="0 0 74 74"><rect width="74" height="74" rx="16" fill="#f2f2f0"/><path d="M27 14H44V10H26a12 12 0 0 0-12 12V54a12 12 0 0 0 12 12H50a12 12 0 0 0 12-12V30H58V54a8 8 0 0 1-8 8H26a8 8 0 0 1-8-8V22a8 8 0 0 1 8-8Z" fill="#565656"/><path d="M48 10 62 26V10Z" fill="#8a8a8a"/><path d="M20 16H42L56 32V56a4 4 0 0 1-4 4H24a4 4 0 0 1-4-4Z" fill="#e6e6e6"/><path d="M42 16V32H56Z" fill="#c9c9c9"/></svg><i class="dock-dot"></i></div>
  <div class="dock-sep"></div>
  <div class="dock-item"><svg class="dock-thumb" width="96" height="86" viewBox="0 0 96 86"><rect x="5" y="5" width="86" height="66" fill="#23272e"/><rect x="5" y="5" width="86" height="4" fill="#3a3f47"/><path d="M8 14h16M8 20h18M8 26h14M8 32h16M8 38h18M8 44h12M8 50h16M8 56h14" stroke="#6b7280" stroke-width="1.500"/><path d="M30 16h20M34 24h30M34 30h24M38 36h34M38 42h22M34 48h30M30 54h18" stroke="#55606d" stroke-width="1.500"/><path d="M46 36h14M50 48h16" stroke="#c69b5f" stroke-width="1.500"/><ellipse cx="76" cy="68" rx="15" ry="16" fill="#fff"/><rect x="68" y="60" width="17" height="17" rx="2" fill="#4a7fe6"/><path d="M76 62 71 78M76 62 81 78" stroke="#1c2a38" stroke-width="2"/><path d="M70 60a6 5 0 0 1 12 0Z" fill="#68d27c"/></svg><i class="dock-dot dock-dot-off"></i></div>
  <div class="dock-item"><svg class="dock-thumb" width="96" height="86" viewBox="0 0 96 86"><rect x="5" width="86" height="76" fill="#f4f4f5"/><rect x="5" width="26" height="76" fill="#dee1e6"/><rect x="7" y="30" width="22" height="5" fill="#3d86f0"/><path d="M9 14h14M9 22h12M9 42h14M9 50h16M9 58h12M37 12h14M37 30h40M37 46h40M37 58h40" stroke="#9aa0a6" stroke-width="1.500"/><rect x="35" y="18" width="50" height="8" fill="#fff"/><rect x="35" y="36" width="50" height="8" fill="#fff"/><rect x="35" y="50" width="50" height="6" fill="#fff"/><rect x="72" y="54" width="24" height="28" rx="5" fill="#9a9a96"/><circle cx="84" cy="68" r="10" fill="#3f3f3f"/><circle cx="84" cy="68" r="6" fill="#8b8b8b"/></svg><i class="dock-dot dock-dot-off"></i></div>
  <div class="dock-item"><svg class="dock-trash" width="70" height="84" viewBox="0 0 70 84"><path d="M3 14H67L60 78C59 82 11 82 10 78Z" fill="#dfe2e3"/><path d="M14 20 22 76M35 20V78M56 20 48 76" stroke="#f2f3f3" stroke-width="3"/><ellipse cx="35" cy="14" rx="32" ry="7" fill="#bfc4c6"/><path d="M10 14 20 2 28 12 36 0 46 12 56 4 60 14Z" fill="#eceeef"/><path d="M28 12l8-8 6 8Z" fill="#6f7f6a"/><path d="M42 6l8 6-8 2Z" fill="#49515c"/></svg><i class="dock-dot dock-dot-off"></i></div>
</div>
</body>
</html>
```

FILE: styles.css
```css
* { box-sizing: border-box; }
html, body { margin: 0; padding: 0; }
body {
  position: relative;
  width: 2880px;
  height: 1800px;
  overflow: hidden;
  font-family: "Inter", "Liberation Sans", sans-serif;
  background-color: #0c1e32;
  background-image:
    repeating-linear-gradient(62deg, rgba(120,150,180,.07) 0 2px, transparent 2px 7px),
    linear-gradient(90deg, transparent 60%, rgba(16,60,62,.35)),
    linear-gradient(180deg, #a7d3fb 0, #8fbde0 120px, #d2d6da 165px, #2c3a34 210px, #3a4a3c 420px, #6a7866 610px, #2a3830 800px, #8a7a50 930px, #2f3b30 970px, #5e6a52 1100px, #3a4638 1250px, #1e2a2c 1400px, #1a2a36 1600px, #0c1e32 1680px);
}
.defs { display: none; }
svg { flex: none; display: block; }

/* a second window peeking out behind the browser */
.back-window {
  position: absolute;
  left: 2866px;
  top: 210px;
  width: 5px;
  height: 853px;
  border-radius: 0 4px 4px 0;
  background: #b4b4b4;
}

/* macOS menu bar */
.menubar {
  height: 48px;
  display: flex;
  justify-content: space-between;
  align-items: center;
  font-size: 25.5px;
  color: #111a20;
  background: linear-gradient(90deg, #a0cffb, #a8d4fb);
}
.menu-left { display: flex; align-items: center; gap: 41px; padding-left: 41px; }
.apple { margin-right: -1px; margin-bottom: 4px; }
.menu-strong { font-weight: 700; }
.menu-right { display: flex; align-items: center; gap: 38px; padding-right: 38px; }
.badge-num { font: 700 16px "Inter", sans-serif; fill: #fff; text-anchor: middle; }
.input-a {
  width: 44px; height: 32px; border-radius: 5px;
  background: #111a20; color: #a8d4fb; font-weight: 600;
  display: flex; align-items: center; justify-content: center;
}
.input-abc { margin-left: -27px; font-size: 22px; }
.mr-bt { margin-left: 3px; }
.mr-wifi { margin-left: -4px; }
.mr-ctl { margin-left: -3px; }
.mr-siri { margin-left: -4px; }
.clock { margin-left: -6px; font-size: 25.4px; font-variant-numeric: tabular-nums; }

/* browser window */
.window {
  position: relative;
  width: 2866px;
  height: 1623px;
  margin-top: 2px;
  border-radius: 14px;
  overflow: hidden;
  display: flex;
  flex-direction: column;
  background: #fff;
}
.tabstrip {
  height: 84px;
  flex: none;
  display: flex;
  align-items: center;
  background: #fbdf75;
  border-top: 2px solid #f4d874;
}
.lights { display: flex; gap: 16px; padding-left: 42px; margin-bottom: 22px; width: 188px; }
.light { width: 24px; height: 24px; border-radius: 50%; border: 1px solid rgba(0,0,0,.12); }
.red { background: #f26d5f; }
.amber { background: #f4c04f; }
.green { background: #63c755; }
.tabs { display: flex; align-items: center; width: 2434px; height: 100%; padding-top: 8px; }
.tab {
  width: 135.3px;
  height: 40px;
  flex: none;
  display: flex;
  align-items: center;
  gap: 16px;
  padding-left: 14px;
  border-right: 2px solid #b49a4c;
  font-size: 24px;
  letter-spacing: -.2px;
  color: #1f1f1f;
}
.ink { color: #111; }
.tab-title {
  width: 58px;
  overflow: hidden;
  white-space: nowrap;
  -webkit-mask-image: linear-gradient(90deg, #000 70%, transparent);
  mask-image: linear-gradient(90deg, #000 70%, transparent);
}
.tab-active {
  width: 135px;
  height: 68px;
  align-self: flex-end;
  padding-left: 16px;
  gap: 16px;
  background: #fff;
  border: 0;
  border-radius: 16px 16px 0 0;
}
.tab-title-short { width: 12px; -webkit-mask-image: none; mask-image: none; }
.tab-close { margin-left: 5px; }
.db-red { color: #e8523a; }
.db-gray { color: #c8d1d7; }
.globe-dark { color: #5f6b75; }
.globe-light { color: #a8adb2; }
.zip { font: 700 10px "Inter", sans-serif; fill: #3a55c8; }
.newtab { margin-left: 32px; margin-top: 8px; }
.tabmenu { margin-left: 133px; margin-top: 8px; }

.toolbar {
  height: 66px;
  flex: none;
  display: flex;
  align-items: center;
  padding: 6px 0 0 28px;
  gap: 34px;
  background: #fff;
}
.omnibox {
  width: 2122px;
  height: 56px;
  margin-left: -3px;
  display: flex;
  align-items: center;
  padding-left: 28px;
  border-radius: 28px;
  background: #e0e0e0;
  font-size: 28px;
  letter-spacing: .1px;
  color: #5f6368;
}
.url { margin-left: 23px; white-space: nowrap; }
.url b { font-weight: 400; color: #1f1f1f; }
.omni-share { margin-left: auto; }
.omni-star { margin-left: 38px; margin-right: 20px; }
.tool-ext { margin-left: -6px; }
.profile {
  width: 175px; height: 56px;
  margin-left: -12px;
  display: flex; align-items: center; gap: 13px;
  padding-left: 4px;
  border: 3px solid #2f62c8;
  border-radius: 28px;
  background: #edf2fb;
}
.avatar {
  width: 44px; height: 44px; border-radius: 50%;
  background: #3c85cc; color: #fff; font-size: 26px;
  display: flex; align-items: center; justify-content: center;
}
.paused { color: #2f5fc4; font-size: 25px; }
.tool-more { margin-left: -2px; }

.bookmarks {
  height: 72px;
  flex: none;
  display: flex;
  align-items: center;
  padding: 0 0 4px 27px;
  gap: 34px;
  font-size: 23.7px;
  color: #1f1f1f;
  background: #fff;
  border-bottom: 2px solid #c9c9c9;
}
.bm { display: flex; align-items: center; gap: 16px; white-space: nowrap; }
.bm-google { padding-left: 4px; gap: 22px; }
.jpg { font: 700 13px "Inter", sans-serif; fill: #fff; }
.bez { font: 700 6px "Inter", sans-serif; fill: #333; }

/* app */
.app {
  position: relative;
  height: 1288px;
  flex: none;
  display: flex;
  flex-direction: column;
  background: #fff;
}
.app-head {
  height: 94px;
  flex: none;
  display: flex;
  align-items: center;
  padding-left: 40px;
  background: #1a2a30;
  border-bottom: 3px solid #2f3e47;
  color: #c8d1d7;
  font-size: 26px;
}
.brand-ms { width: 205px; white-space: nowrap; font-size: 27.2px; }
.brand-sep { width: 2px; height: 48px; margin-left: 17px; background: #44525b; }
.db-gray { margin-left: 17px; }
.brand-db { margin-left: 16px; width: 194px; font-size: 36px; font-weight: 500; letter-spacing: -1px; color: #fff; }
.search {
  width: 999px;
  height: 64px;
  display: flex;
  align-items: center;
  padding-left: 26px;
  gap: 17px;
  border-radius: 8px;
  background: #4d5a63;
  font-size: 25.5px;
  color: #dfe5e9;
}
.search-kbd { margin-left: auto; margin-right: 26px; color: #6a7781; }
.ws-name { margin-left: 390px; width: 266px; white-space: nowrap; font-size: 25.5px; }
.head-gift { margin-left: 46px; }
.head-help { margin-left: 48px; }
.email { margin-left: 45px; width: 403px; white-space: nowrap; font-size: 25.7px; }
.head-caret { margin-left: 12px; }
.app-body { flex: 1; min-height: 0; display: flex; }

.sidebar {
  width: 400px;
  flex: none;
  display: flex;
  flex-direction: column;
  background: #1a2a30;
  color: #c8d1d7;
  font-size: 26px;
  padding-top: 26px;
}
.persona { height: 36px; display: flex; align-items: center; padding-left: 40px; }
.persona-d {
  width: 36px; height: 36px; border: 3px solid #c8d1d7; border-radius: 5px;
  display: flex; align-items: center; justify-content: center;
  font-size: 22px; font-weight: 600;
}
.persona-name { margin-left: 17px; width: 259px; white-space: nowrap; }
.persona-caret { width: 0; height: 0; border: 8px solid transparent; border-top: 9px solid #c8d1d7; border-bottom: 0; }
.side-rule { height: 2px; margin: 25px 16px 0; background: #47555e; flex: none; }
.side-rule-mid { margin-top: 8px; margin-bottom: 0; }
.side-rule-low { margin-top: 23px; }
.side-item {
  height: 68px;
  margin: 8px 16px 0;
  flex: none;
  display: flex;
  align-items: center;
  padding-left: 26px;
  gap: 21px;
  border-radius: 6px;
  position: relative;
}
.side-item svg { margin-left: -1px; width: 30px; }
.side-new { margin-top: 15px; background: #fff; color: #272c32; }
.side-active { background: #273546; }
.side-active::before {
  content: "";
  position: absolute;
  left: -16px; top: 0; bottom: 0;
  width: 6px;
  background: #ff6b4f;
}
.side-spacer { flex: 1; }
.side-tasks { height: 36px; padding-left: 40px; line-height: 36px; }
.side-menu { margin-top: 8px; margin-bottom: 23px; }

.panel {
  width: 534px;
  flex: none;
  display: flex;
  flex-direction: column;
  background: #fff;
  border-right: 4px solid #dfdfdf;
  font-size: 25px;
  color: #4a5a69;
}
.panel-head { height: 102px; flex: none; display: flex; align-items: center; padding: 4px 0 0 24px; }
.panel-head h2 { margin: 0; width: 296px; font-size: 40.5px; font-weight: 500; letter-spacing: -.4px; color: #272c32; }
.home-btn {
  width: 148px; height: 60px;
  margin-top: 2px;
  display: flex; align-items: center; gap: 13px;
  padding-left: 23px;
  border: 3px solid #d2d7dc;
  border-radius: 6px;
  color: #272c32;
}
.pin { margin: 0 0 0 24px; }
.panel-root { height: 82px; margin-left: 20px; flex: none; padding-left: 25px; display: flex; align-items: center; background: #eee; color: #272c32; }
.panel-item { height: 56px; flex: none; display: flex; align-items: center; gap: 10px; padding-left: 45px; }
.panel-root + .panel-item { margin-top: 1px; }
.panel-item-users { padding-left: 41px; gap: 8px; }
.panel-spacer { flex: 1; }
.panel-foot {
  height: 55px; flex: none;
  display: flex; align-items: center; justify-content: center;
  padding-left: 4px;
  border-top: 3px solid #dfdfdf;
  font-weight: 600; color: #396fbb; font-size: 26.35px;
}

.content { flex: 1; display: flex; flex-direction: column; padding: 0 46px 0 28px; min-width: 0; }
.content-rule { height: 3px; margin-top: 185px; background: #e4ebf6; flex: none; }
.content-actions { display: flex; justify-content: flex-end; margin-top: 30px; }
.create-job {
  width: 176px; height: 64px;
  display: flex; align-items: center; justify-content: center;
  border-radius: 6px;
  background: #3b6eb4;
  color: #fff;
  font-size: 26px;
}
.jobs-head {
  height: 73px;
  margin-top: 32px;
  display: flex;
  align-items: center;
  background: #eff2f6;
  border-bottom: 3px solid #d9e0ea;
  font-size: 27px;
  font-weight: 600;
  color: #272c32;
}
.col-owner { width: 1121px; text-align: right; }
.col-last {
  margin-left: 234px;
  width: 375px;
  height: 40px;
  padding-left: 14px;
  line-height: 40px;
  border-left: 2px solid #cfd5dc;
  border-right: 2px solid #cfd5dc;
  white-space: nowrap;
}
.col-gear { margin-left: 80px; }

/* modal */
.overlay {
  position: absolute;
  top: 0; left: 0; right: 0; bottom: 0;
  padding-top: 148px;
  display: flex;
  justify-content: center;
  align-items: flex-start;
  background: rgba(0,0,0,.455);
}
.modal {
  width: 1280px;
  height: 944px;
  display: flex;
  flex-direction: column;
  padding: 0 48px;
  border-radius: 8px;
  background: #fff;
  box-shadow: 0 0 40px rgba(0,0,0,.12);
  color: #1f272e;
  font-size: 26px;
}
.modal-head { height: 128px; display: flex; align-items: center; justify-content: space-between; padding-right: 4px; flex: none; }
.modal-head h3 { margin: 0; font-size: 42px; font-weight: 600; letter-spacing: -.5px; }
.import-from { display: flex; align-items: flex-start; height: 185px; padding-top: 33px; flex: none; }
.import-label { width: 178px; font-weight: 600; padding-top: 8px; font-size: 26px; }
.radio { width: 33px; height: 33px; flex: none; border-radius: 50%; border: 2px solid #6c7a88; background: #fff; }
.radio-on { border: 12px solid #3a6cae; }
.radio-text { margin-left: 16px; margin-right: 28px; line-height: 33px; width: 45px; font-size: 25.5px; }
.dropzone {
  height: 382px;
  flex: none;
  padding: 34px;
  background: #f9f9f9;
  border: 2px solid #eee;
}
.file-card {
  width: 228px;
  height: 310px;
  padding: 12px 12px 0;
  background: #fff;
  border: 2px solid #a8a8a8;
  display: flex;
  flex-direction: column;
}
.file-name { background: #f5f5f5; height: 187px; padding: 10px 10px 0; line-height: 40px; font-size: 25.5px; letter-spacing: .1px; font-variant-numeric: tabular-nums; }
.progress { height: 11px; background: #d8d8d8; flex: none; }
.progress-bar {
  width: 85%;
  height: 100%;
  border-radius: 2px;
  background: repeating-linear-gradient(135deg, #9fcf63 0 6px, #c1e197 6px 10px);
}
.file-size { margin-top: 15px; padding-left: 8px; line-height: 30px; word-spacing: 3px; }
.file-cancel { margin-top: 6px; line-height: 30px; font-size: 25.5px; color: #2c6cb4; text-decoration: underline; white-space: nowrap; }
.lib-note { margin: 47px 0 0; text-align: center; line-height: 32px; font-size: 24px; }
.lib-note a { color: #3a6cae; }
.modal-foot { display: flex; justify-content: flex-end; align-items: center; gap: 15px; margin-top: 49px; margin-right: -1px; }
.btn-close {
  width: 121px; height: 64px;
  padding-bottom: 2px;
  display: flex; align-items: center; justify-content: center;
  border: 2px solid #d8dfe7; border-radius: 5px;
}
.btn-primary {
  width: 133px; height: 68px;
  display: flex; align-items: center; justify-content: center;
  border-radius: 5px;
  background: #3a6fae;
  box-shadow: 0 0 0 2px #fff, 0 0 0 4px #2f68ad;
  color: #fff;
}
.spinner { font-style: normal; font-size: 20px; margin-left: 14px; }

/* download shelf */
.downloads {
  flex: 1;
  display: flex;
  align-items: center;
  padding-left: 44px;
  padding-bottom: 4px;
  border-top: 2px solid #c8c8c8;
  background: linear-gradient(180deg, #fff 0, #fff 38%, #e3e3e3 100%);
  font-size: 27.3px;
  color: #1f1f1f;
}
.dl-name { margin-left: 30px; width: 278px; white-space: nowrap; }
.dl-caret { margin-left: 40px; }
.dl-sep { width: 2px; height: 88px; margin-left: 37px; background: #bcbcbc; }
.dl-all {
  width: 161px; height: 63px;
  margin-left: auto;
  display: flex; align-items: center; justify-content: center;
  border: 2px solid #dcdcdc; border-radius: 6px;
  color: #2f6be0;
  font-size: 25px;
  font-weight: 500;
}
.dl-x { margin: 0 27px 0 27px; }
.dl-zip { font: 400 4px "Inter", sans-serif; fill: #888; }

/* dock */
.dock {
  width: 2690px;
  height: 112px;
  margin: 4px 0 0 95px;
  display: flex;
  padding-left: 3px;
  border: 2px solid rgba(255,255,255,.14);
  border-radius: 26px;
  background: linear-gradient(90deg, #53657a, #5d7488 55%, #667a82);
}
.dock-item {
  width: 96px;
  height: 108px;
  flex: none;
  display: flex;
  flex-direction: column;
  align-items: center;
  padding-top: 14px;
}
.dock-dot { width: 8px; height: 8px; margin-top: 10px; border-radius: 50%; background: #000; }
.dock-dot-off { visibility: hidden; }
.dock-sep { width: 44px; flex: none; display: flex; justify-content: center; padding-top: 13px; }
.dock-sep::before { content: ""; width: 2px; height: 82px; background: #2d3f50; }
.dock-as { margin: -5px 0 -5px; }
.dock-thumb { margin-top: -2px; margin-bottom: -10px; }
.dock-trash { margin-top: -7px; margin-bottom: -3px; }
.cal-month { font: 700 17px "Inter", sans-serif; fill: #fff; text-anchor: middle; }
.cal-day { font: 300 44px "Inter", sans-serif; fill: #222; text-anchor: middle; }
.tv-text { font: 400 34px "Inter", sans-serif; fill: #fff; }
.help-q { font: 400 22px "Inter", sans-serif; fill: #c8d1d7; text-anchor: middle; }
```
